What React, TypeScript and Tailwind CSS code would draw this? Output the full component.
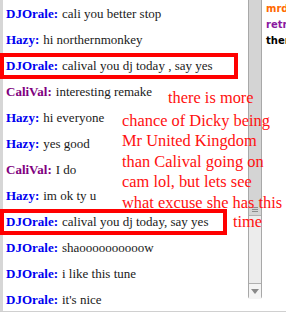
const rows = [
  { name: "DJOrale", color: "text-[#0000f0]", msg: "cali you better stop" },
  { name: "Hazy", color: "text-[#0000f0]", msg: "hi northernmonkey" },
  { name: "DJOrale", color: "text-[#0000f0]", msg: "calival you dj today , say yes" },
  { name: "CaliVal", color: "text-[#800080]", msg: "interesting remake" },
  { name: "Hazy", color: "text-[#0000f0]", msg: "hi everyone" },
  { name: "Hazy", color: "text-[#0000f0]", msg: "yes good" },
  { name: "CaliVal", color: "text-[#800080]", msg: "I do" },
  { name: "Hazy", color: "text-[#0000f0]", msg: "im ok ty u" },
  { name: "DJOrale", color: "text-[#0000f0]", msg: "calival you dj today, say yes" },
  { name: "DJOrale", color: "text-[#0000f0]", msg: "shaoooooooooow" },
  { name: "DJOrale", color: "text-[#0000f0]", msg: "i like this tune" },
  { name: "DJOrale", color: "text-[#0000f0]", msg: "it's nice" },
];

const note = [
  "chance of Dicky being",
  "Mr United Kingdom",
  "than Calival going on",
  "cam lol, but lets see",
  "what excuse she has this",
];

export default function App() {
  return (
    <div className="relative w-[286px] h-[314px] bg-white overflow-hidden">
      <div className="flex h-[312px] border-b border-[#d0d0d0]">
        {/* chat log */}
        <div className="w-[248px] border-l-[3px] border-[#d6d6d6] pt-px font-['Liberation_Serif',serif] text-[13px] text-[#1a1a1a]">
          {rows.map((r, i) => (
            <div key={i} className="h-[26px] flex items-center pl-[3px] whitespace-nowrap">
              <span className={`font-bold ${r.color}`}>{r.name}:</span>
              <span className="ml-[4px]">{r.msg}</span>
            </div>
          ))}
        </div>

        {/* scrollbar */}
        <div className="w-[14px] h-[299px] flex flex-col border-x border-[#a8a8a8] rounded-b-[3px] bg-[#ececec]">
          <div className="h-[216px] bg-[#d4d4d4] border-b border-[#b0b0b0] flex flex-col items-center justify-end pb-[3px] gap-px">
            <div className="w-[6px] h-px bg-[#8c8c8c]" />
            <div className="w-[6px] h-px bg-[#8c8c8c]" />
            <div className="w-[6px] h-px bg-[#8c8c8c]" />
          </div>
          <div className="flex-1" />
          <div className="h-[16px] border-t border-[#b0b0b0] bg-[#f4f4f4] flex items-center justify-center">
            <svg width="8" height="5" viewBox="0 0 8 5">
              <path d="M0 0 L8 0 L4 5 Z" fill="#8a8a8a" />
            </svg>
          </div>
        </div>

        {/* user list */}
        <div className="flex-1 pl-[4px] pt-px font-['DejaVu_Sans',sans-serif] text-[10px] font-bold leading-[16px] whitespace-nowrap overflow-hidden">
          <div className="text-[#ff6a00]">mrdeez</div>
          <div className="text-[#8a1aa0]">retro</div>
          <div className="text-black">there</div>
        </div>
      </div>

      {/* red annotation boxes */}
      <div className="absolute left-0 top-[53px] w-[238px] h-[26px] border-4 border-[#ff0000]" />
      <div className="absolute left-0 top-[209px] w-[227px] h-[26px] border-4 border-[#ff0000]" />

      {/* red annotation text */}
      <div className="absolute left-[168px] top-[88px] font-['Liberation_Serif',serif] text-[16.4px] leading-[20px] text-[#ff1010] whitespace-nowrap">
        there is more
      </div>
      <div className="absolute left-[122px] top-[111px] font-['Liberation_Serif',serif] text-[16.4px] leading-[20.4px] text-[#ff1010] whitespace-nowrap">
        {note.map((l, i) => (
          <div key={i}>{l}</div>
        ))}
      </div>
      <div className="absolute left-[233px] top-[212px] font-['Liberation_Serif',serif] text-[16.4px] leading-[20px] text-[#ff1010]">
        time
      </div>
    </div>
  );
}
